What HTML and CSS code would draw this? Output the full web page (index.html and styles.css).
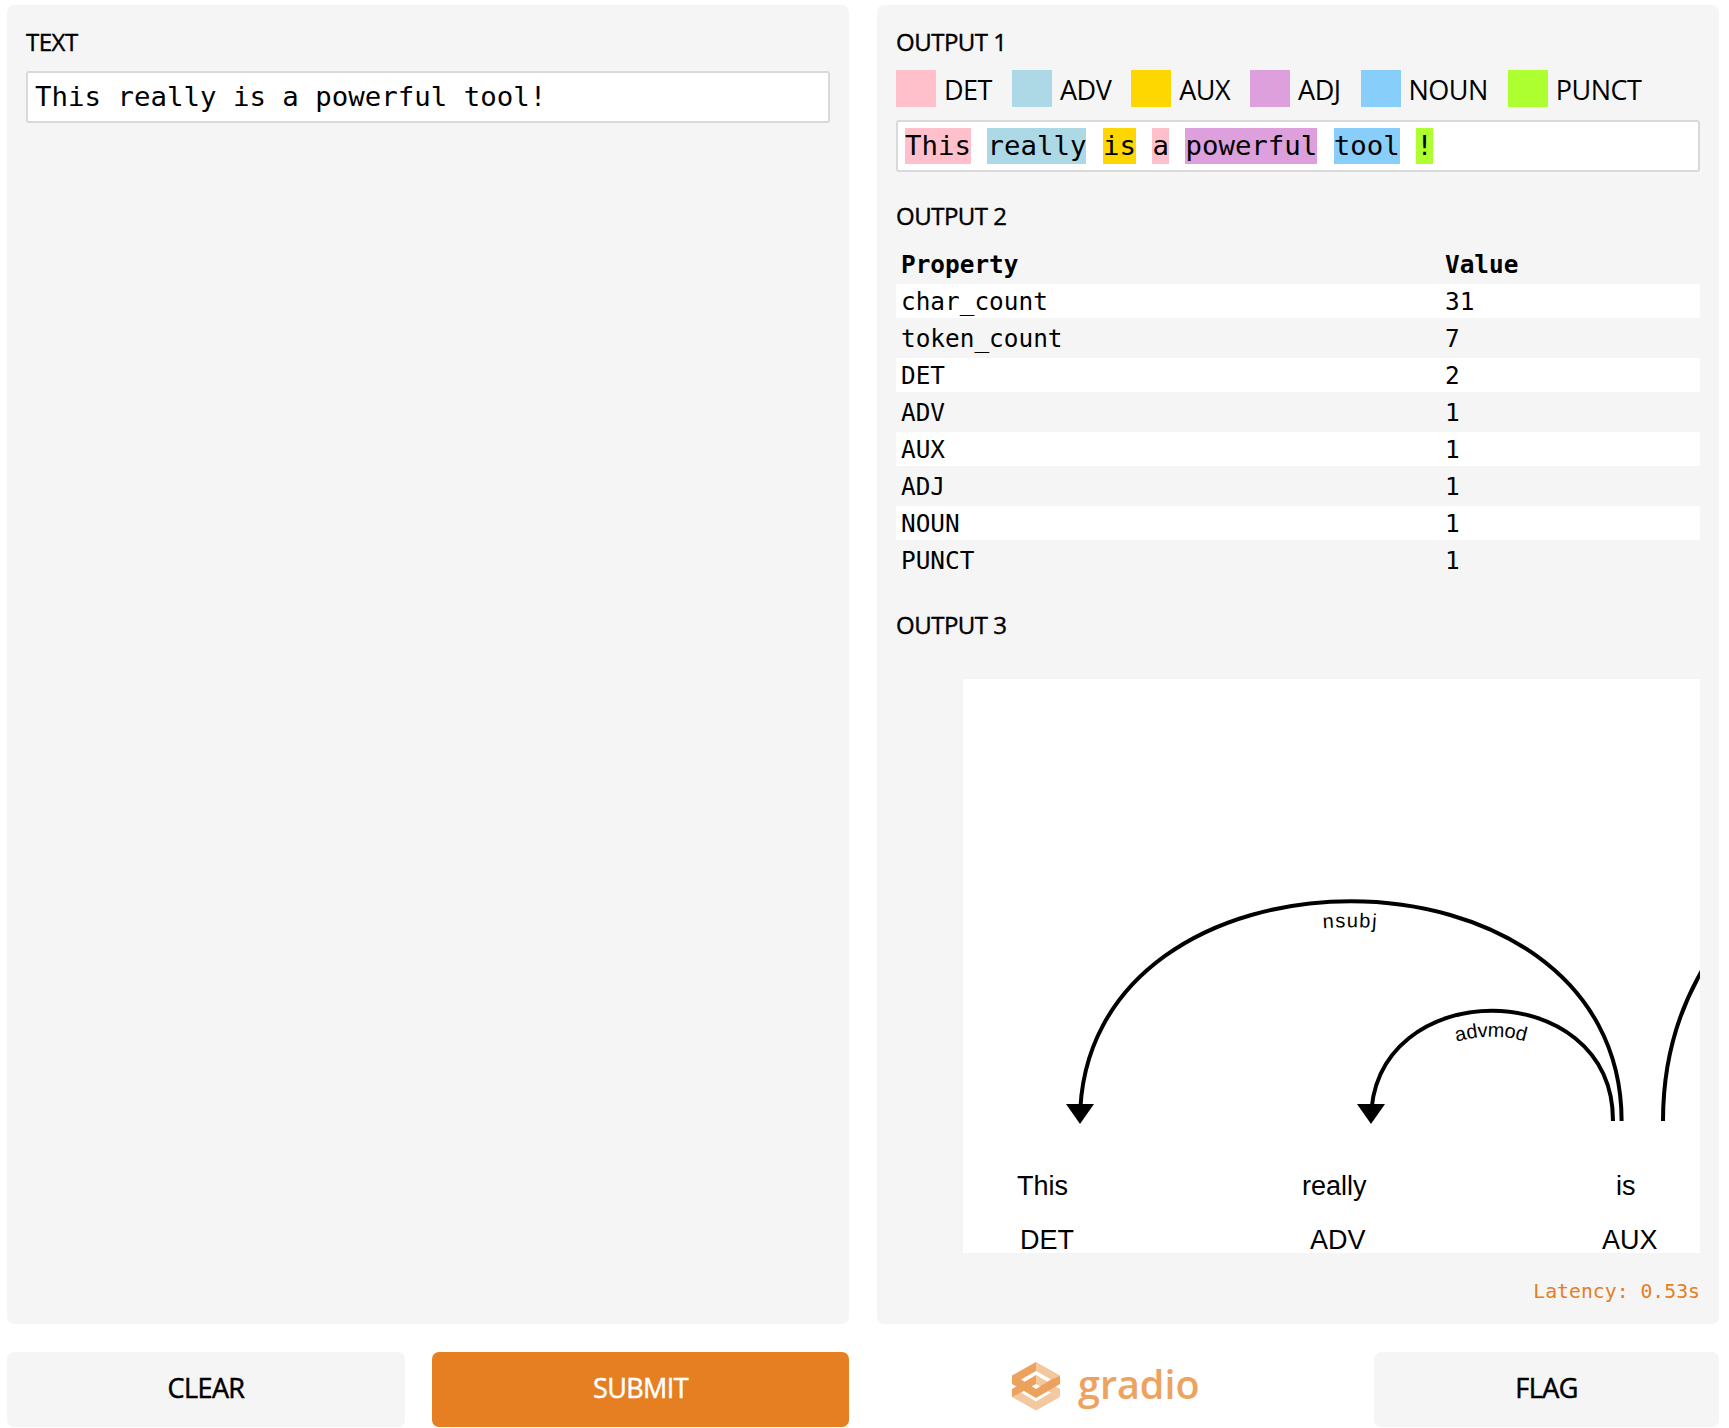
FILE: index.html
```html
<!DOCTYPE html>
<html lang="en">
<head>
    <meta charset="UTF-8">
    <title>Gradio</title>
    <link rel="stylesheet" href="styles.css">
</head>
<body>
    <div class="columns">
        <div class="panel">
            <div class="label">TEXT</div>
            <div class="textbox input-text">This really is a powerful tool!</div>
        </div>
        <div class="panel">
            <div class="label">OUTPUT 1</div>
            <div class="legend">
                <span class="swatch det"></span><span class="legend-name">DET</span>
                <span class="swatch adv"></span><span class="legend-name">ADV</span>
                <span class="swatch aux"></span><span class="legend-name">AUX</span>
                <span class="swatch adj"></span><span class="legend-name">ADJ</span>
                <span class="swatch noun"></span><span class="legend-name">NOUN</span>
                <span class="swatch punct"></span><span class="legend-name">PUNCT</span>
            </div>
            <div class="textbox tagged"><span class="det">This</span> <span class="adv">really</span> <span class="aux">is</span> <span class="det">a</span> <span class="adj">powerful</span> <span class="noun">tool</span> <span class="punct">!</span></div>

            <div class="label second">OUTPUT 2</div>
            <table class="props">
                <thead>
                    <tr><th>Property</th><th>Value</th></tr>
                </thead>
                <tbody>
                    <tr><td>char_count</td><td>31</td></tr>
                    <tr><td>token_count</td><td>7</td></tr>
                    <tr><td>DET</td><td>2</td></tr>
                    <tr><td>ADV</td><td>1</td></tr>
                    <tr><td>AUX</td><td>1</td></tr>
                    <tr><td>ADJ</td><td>1</td></tr>
                    <tr><td>NOUN</td><td>1</td></tr>
                    <tr><td>PUNCT</td><td>1</td></tr>
                </tbody>
            </table>

            <div class="label third">OUTPUT 3</div>
            <svg class="deps" width="737" height="574" viewBox="963 678 737 574">
                <defs>
                    <path id="arcNsubj" d="M1080,1120 C1080,827 1621.6,827 1621.6,1120"/>
                    <path id="arcAdvmod" d="M1371,1120 C1371,973 1613,973 1613,1120"/>
                </defs>
                <use href="#arcNsubj" class="arc"/>
                <use href="#arcAdvmod" class="arc"/>
                <path class="arc" d="M1663,1120 C1663,684 2475,684 2475,1120"/>
                <path d="M1080,1123 L1066,1103 L1094,1103 Z"/>
                <path d="M1371,1123 L1357,1103 L1385,1103 Z"/>
                <text class="arc-label"><textPath href="#arcNsubj" startOffset="50%" text-anchor="middle">nsubj</textPath></text>
                <text class="arc-label"><textPath href="#arcAdvmod" startOffset="50%" text-anchor="middle">advmod</textPath></text>
                <text class="word" x="1017" y="1194">This</text>
                <text class="word" x="1020" y="1248">DET</text>
                <text class="word" x="1302" y="1194">really</text>
                <text class="word" x="1310" y="1248">ADV</text>
                <text class="word" x="1616" y="1194">is</text>
                <text class="word" x="1602" y="1248">AUX</text>
            </svg>
            <div class="latency">Latency: 0.53s</div>
        </div>
    </div>

    <div class="columns footer">
        <div class="actions">
            <button class="btn btn-clear">CLEAR</button>
            <button class="btn btn-submit">SUBMIT</button>
        </div>
        <div class="actions">
            <div class="brand">
                <svg class="brand-icon" width="48" height="49" viewBox="0 0 48 49">
                    <polygon class="light" points="24,13 48,27 48,35 39,30.5 24,22"/>
                    <polygon class="light" points="0,27 0,35 24,48.5 48,35 39,30.5 24,39.5 9,30.5"/>
                    <polygon class="light" points="24,0 48,13.5 39,17.5 24,9"/>
                    <polygon class="dark" points="0,27 0,35 9,30.5 24,22 24,13"/>
                    <polygon class="dark" points="24,0 0,13.5 0,22 24,36 24,27 9,17.5 24,9"/>
                    <polygon class="dark" points="48,13.5 48,22 24,36 24,27 39,17.5"/>
                </svg>
                <span class="brand-name">gradio</span>
            </div>
            <button class="btn btn-flag">FLAG</button>
        </div>
    </div>
</body>
</html>
```

FILE: styles.css
```css
* {
    margin: 0;
    padding: 0;
    box-sizing: border-box;
}
body {
    background: white;
    padding: 5px 10px 0 7px;
    font-family: "Open Sans", sans-serif;
    color: black;
}
.columns {
    display: grid;
    grid-template-columns: 842px 842px;
    gap: 28px;
}
.panel {
    background: #f5f5f5;
    border-radius: 7px;
    height: 1319px;
    padding: 20px 19px 0;
}
.label {
    font-size: 24px;
    letter-spacing: -0.5px;
    -webkit-text-stroke: 0.4px black;
    height: 36px;
    line-height: 34px;
}
.label.second {
    margin-top: 27px;
}
.label.third {
    margin-top: 28px;
}
.textbox {
    background: white;
    border: 2px solid #d9d9d9;
    border-radius: 3px;
    height: 52px;
    font-family: "DejaVu Sans Mono", monospace;
    font-size: 27.4px;
    padding: 6px 7px;
    line-height: 36px;
    white-space: pre;
}
.input-text {
    margin-top: 10px;
}
.legend {
    display: flex;
    margin-top: 9px;
    height: 37px;
    margin-bottom: 13px;
}
.swatch {
    width: 40px;
    height: 37px;
}
.legend-name {
    font-size: 27px;
    line-height: 39px;
    letter-spacing: -0.5px;
    margin-left: 8px;
    margin-right: 20px;
}
.det { background: #ffc0cb; }
.adv { background: #add8e6; }
.aux { background: #ffd700; }
.adj { background: #dda0dd; }
.noun { background: #87cefa; }
.punct { background: #adff2f; }
.tagged span {
    display: inline-block;
    height: 36px;
}
.props {
    width: 100%;
    margin-top: 11px;
    border-collapse: collapse;
    font-family: "DejaVu Sans Mono", monospace;
    font-size: 24.4px;
}
.props th,
.props td {
    text-align: left;
    padding: 0 0 0 5px;
    font-weight: normal;
}
.props th {
    height: 38px;
    padding-bottom: 2px;
    font-weight: bold;
}
.props th:first-child {
    width: 544px;
}
.props tbody tr:nth-child(odd) td {
    height: 34px;
    background: white;
}
.props tbody tr:nth-child(even) td {
    height: 40px;
}
.deps {
    display: block;
    margin: 35px 0 0 67px;
    background: white;
}
.arc {
    fill: none;
    stroke: black;
    stroke-width: 4px;
}
.word {
    font-family: "Liberation Sans", sans-serif;
    font-size: 27px;
}
.arc-label {
    font-family: "Liberation Sans", sans-serif;
    font-size: 20px;
    letter-spacing: 2.2px;
}
.arc-label textPath {
    baseline-shift: -26px;
}
.latency {
    font-family: "DejaVu Sans Mono", monospace;
    font-size: 19.8px;
    color: #e67e22;
    text-align: right;
    margin-top: 27px;
}
.footer {
    margin-top: 28px;
}
.actions {
    display: flex;
    gap: 27px;
    height: 75px;
}
.btn {
    border: none;
    border-radius: 7px;
    padding-bottom: 4px;
    font-family: "Open Sans", sans-serif;
    font-size: 27px;
    letter-spacing: -0.6px;
    -webkit-text-stroke: 0.5px currentColor;
}
.btn-clear {
    width: 398px;
    background: #f5f5f5;
    color: black;
}
.btn-submit {
    width: 417px;
    background: #e67e22;
    color: white;
}
.btn-flag {
    width: 345px;
    margin-left: auto;
    background: #f5f5f5;
    color: black;
}
.brand {
    display: flex;
    align-items: flex-start;
    margin-left: 135px;
    padding-top: 10px;
}
.brand-name {
    font-size: 39.5px;
    font-weight: 600;
    line-height: 44px;
    margin-left: 18px;
    color: #eda35f;
}
.light { fill: #f3c89f; }
.dark { fill: #eca25c; }
```
